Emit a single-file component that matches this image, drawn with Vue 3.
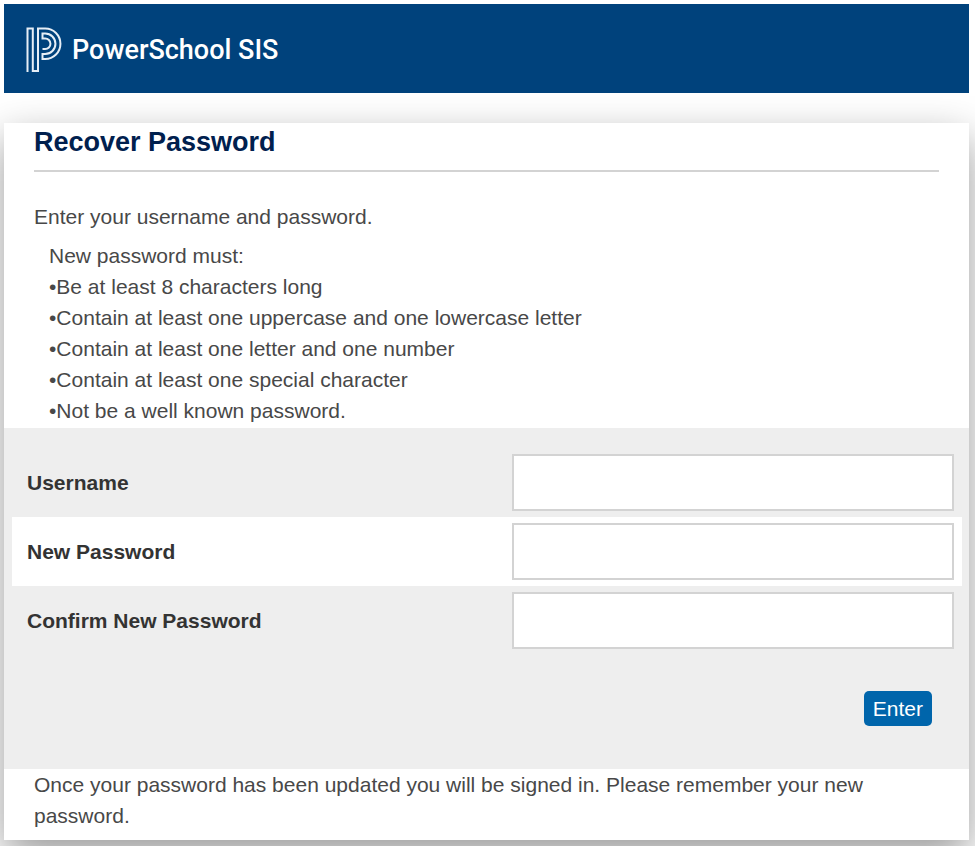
<script setup>
import { reactive } from 'vue'

const rules = [
  'Be at least 8 characters long',
  'Contain at least one uppercase and one lowercase letter',
  'Contain at least one letter and one number',
  'Contain at least one special character',
  'Not be a well known password.',
]

const fields = [
  { id: 'username', label: 'Username', type: 'text' },
  { id: 'new-password', label: 'New Password', type: 'password' },
  { id: 'confirm-password', label: 'Confirm New Password', type: 'password' },
]

const values = reactive({})
</script>

<template>
  <div class="page">
    <header class="brand">
      <svg class="logo" width="36" height="46" viewBox="0 0 36 46" aria-hidden="true">
        <path d="M1.5 45V1.5H6.8V44H12V1.5H19.2A15.2 15.2 0 0 1 19.2 32H16.5V27H19.2A10.2 10.2 0 0 0 19.2 6.5H16.5V11.5H19.2A5.2 5.2 0 0 1 19.2 22H16.5" />
      </svg>
      <span class="brand-name">PowerSchool SIS</span>
    </header>

    <main class="card">
      <h1 class="title">Recover Password</h1>
      <p class="intro">Enter your username and password.</p>
      <div class="rules">
        <p>New password must:</p>
        <ul>
          <li v-for="rule in rules" :key="rule">•{{ rule }}</li>
        </ul>
      </div>

      <form class="form" @submit.prevent>
        <div v-for="field in fields" :key="field.id" class="row">
          <label :for="field.id">{{ field.label }}</label>
          <input :id="field.id" v-model="values[field.id]" :type="field.type" />
        </div>
        <div class="actions">
          <button type="submit">Enter</button>
        </div>
      </form>

      <p class="note">
        Once your password has been updated you will be signed in. Please remember your new password.
      </p>
    </main>
  </div>
</template>

<style>
body {
  background: #fff;
  overflow: hidden;
}
</style>

<style scoped>
.page {
  padding: 4px 6px 6px 4px;
  font-family: "Liberation Sans", Arial, sans-serif;
  font-size: 21px;
  line-height: 31px;
  color: #484848;
}

.brand {
  position: relative;
  z-index: 1;
  display: flex;
  align-items: center;
  gap: 10px;
  padding: 23px 22px 20px;
  background: #00427c;
}

.logo {
  fill: none;
  stroke: #e6eef6;
  stroke-width: 2;
}

.brand-name {
  font-family: Roboto, sans-serif;
  font-size: 27px;
  font-weight: 500;
  color: #fff;
}

.card {
  margin-top: 30px;
  padding: 4px 0 9px;
  background: #fff;
  box-shadow: 0 16px 40px rgba(0, 0, 0, 0.4);
}

p,
ul {
  margin: 0;
  padding: 0;
  list-style: none;
}

.title {
  margin: 0 30px;
  padding-bottom: 12px;
  border-bottom: 2px solid #d3d3d3;
  font-size: 27px;
  line-height: 31px;
  color: #00204e;
}

.intro {
  margin: 29px 30px 8px;
}

.rules {
  padding: 0 45px 2px;
}

.form {
  padding: 20px 7px 43px 8px;
  background: #eee;
}

.row {
  display: grid;
  grid-template-columns: 10fr 9fr;
  align-items: center;
  padding: 6px 0;
}

.row:nth-child(even) {
  background: #fff;
}

.row label {
  padding-left: 15px;
  font-weight: bold;
  color: #333;
}

.row input {
  box-sizing: border-box;
  min-width: 0;
  height: 57px;
  margin-right: 8px;
  padding: 0 12px;
  border: 2px solid #d3d3d3;
  background: #fff;
  font: inherit;
}

.actions {
  display: flex;
  justify-content: flex-end;
  padding: 36px 30px 0 0;
}

.actions button {
  height: 35px;
  padding: 0 9px;
  border: 0;
  border-radius: 5px;
  background: #0065ab;
  color: #fff;
  font: inherit;
}

.note {
  padding: 0 30px;
}
</style>
